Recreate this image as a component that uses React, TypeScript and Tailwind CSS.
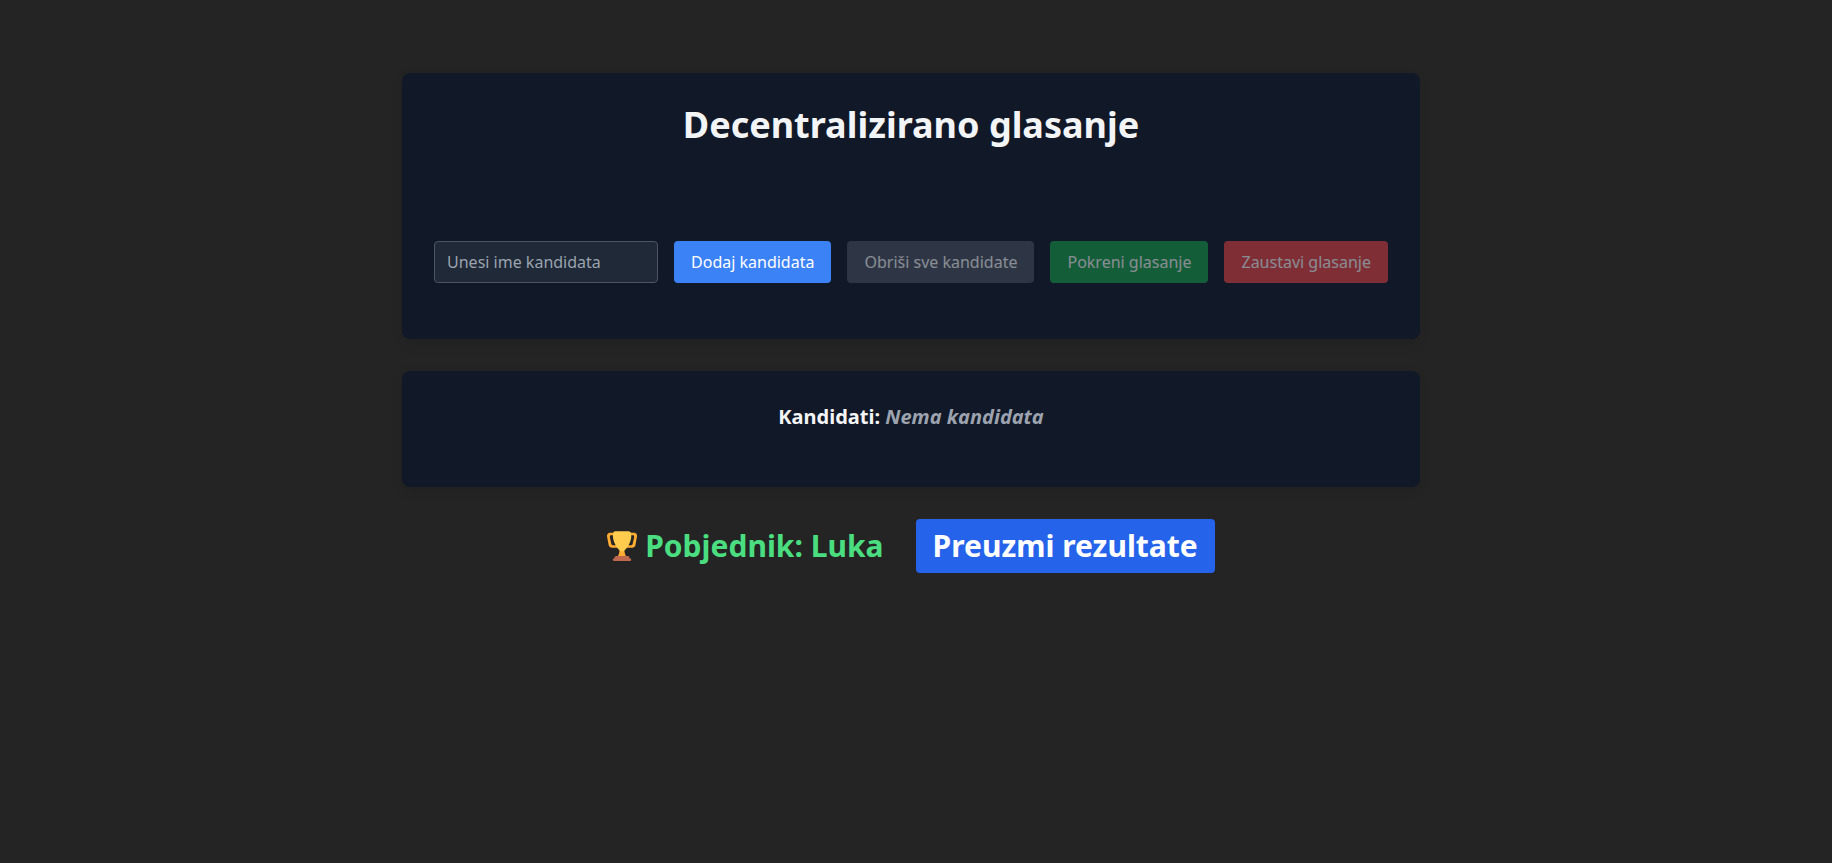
import { useState } from "react";

const control = "rounded border border-transparent px-4 py-2 text-white disabled:opacity-50";
const card = "rounded-lg bg-[#111827] px-8 pt-8 pb-14 text-center shadow-[0_4px_12px_rgba(0,0,0,0.1)]";

function Trophy() {
  return (
    <svg viewBox="0 0 36 36" className="size-[30px]" aria-hidden="true">
      <path
        fill="#FFAC33"
        d="M5.123 5h6C12.227 5 13 4.896 13 6V4c0-1.104-.773-2-1.877-2h-8c-2 0-3.583 2.125-3 5 0 0 1.791 9.375 1.917 9.958C2.373 18.5 4.164 20 6.081 20h6.958c1.105 0-.039-1.896-.039-3v-2c0 1.104-.773 2-1.877 2h-4c-1.104 0-1.833-1.042-2-2S3.539 7.667 3.539 7.667C3.206 5.75 4.018 5 5.123 5zm25.812 0h-6C23.831 5 22 4.896 22 6V4c0-1.104 1.831-2 2.935-2h8c2 0 3.584 2.125 3 5 0 0-1.633 9.419-1.771 10-.354 1.5-2.042 3-4 3h-7.146C21.914 20 22 18.104 22 17v-2c0 1.104 1.831 2 2.935 2h4c1.104 0 1.834-1.042 2-2s1.584-7.333 1.584-7.333C32.851 5.75 32.04 5 30.935 5zM20.832 22c0-6.958-2.709 0-2.709 0s-3-6.958-3 0-3.291 10-3.291 10h12.292c-.001 0-3.292-3.042-3.292-10z"
      />
      <path
        fill="#FFCC4D"
        d="M29.123 6.577c0 6.775-6.77 18.192-11 18.192-4.231 0-11-11.417-11-18.192 0-5.195 1-6.319 3-6.319 1.374 0 6.025-.027 8-.027l7-.001c2.917-.001 4 .684 4 6.347z"
      />
      <path
        fill="#C1694F"
        d="M27 33c0 1.104.227 2-.877 2h-16C9.018 35 9 34.104 9 33v-1c0-1.104 1.164-2 2.206-2h13.917c1.042 0 1.877.896 1.877 2v1z"
      />
      <path
        fill="#C1694F"
        d="M29 34.625c0 .76.165 1.375-1.252 1.375H8.498C7.206 36 7 35.385 7 34.625v-.25C7 33.615 7.738 33 8.498 33h19.25c.759 0 1.252.615 1.252 1.375v.25z"
      />
    </svg>
  );
}

export default function App() {
  const [name, setName] = useState("");

  return (
    <main className="flex min-h-screen flex-col items-center gap-8 bg-[#242424] py-[73px] pr-[10px] font-['Noto_Sans',sans-serif] text-base text-[#f3f4f6]">
      <div className="flex flex-col gap-8">
        <section className={card}>
          <h1 className="mb-24 text-4xl font-bold">Decentralizirano glasanje</h1>
          <div className="flex flex-wrap justify-center gap-4">
            <input
              type="text"
              aria-label="Unesi ime kandidata"
              placeholder="Unesi ime kandidata"
              value={name}
              onChange={(e) => setName(e.target.value)}
              className="w-56 rounded border border-[#4b5563] bg-[#1f2937] px-3 py-2 placeholder:text-[#9ca3af]"
            />
            <button type="button" className={`${control} bg-[#3b82f6]`}>
              Dodaj kandidata
            </button>
            <button type="button" disabled className={`${control} bg-[#4b5563]`}>
              Obriši sve kandidate
            </button>
            <button type="button" disabled className={`${control} bg-[#16a34a]`}>
              Pokreni glasanje
            </button>
            <button type="button" disabled className={`${control} bg-[#ef4444]`}>
              Zaustavi glasanje
            </button>
          </div>
        </section>
        <section className={card}>
          <h2 className="text-xl font-bold">
            Kandidati: <span className="text-[#9ca3af] italic">Nema kandidata</span>
          </h2>
        </section>
      </div>
      <div className="flex items-center gap-8 text-3xl font-bold">
        <h2 className="flex items-center gap-2 text-[#4ade80]">
          <Trophy />
          Pobjednik: Luka
        </h2>
        <button type="button" className={`${control} bg-[#2563eb]`}>
          Preuzmi rezultate
        </button>
      </div>
    </main>
  );
}
